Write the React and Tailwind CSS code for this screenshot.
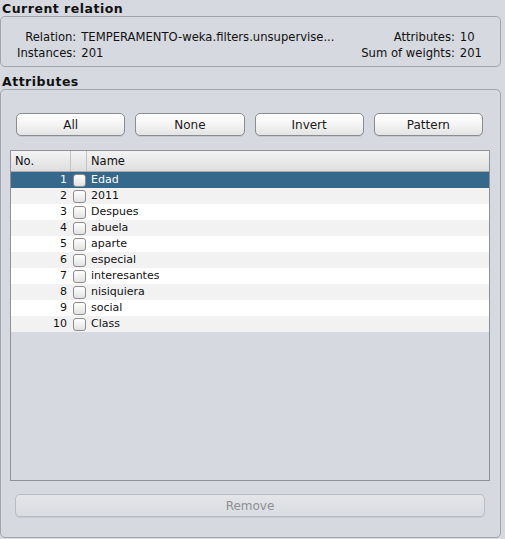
import React from 'react';

const attributes = [
  'Edad', '2011', 'Despues', 'abuela', 'aparte',
  'especial', 'interesantes', 'nisiquiera', 'social', 'Class',
];

const AquaButton = ({ children, disabled }) => (
  <button
    disabled={disabled}
    className={`h-[23px] rounded-[5px] border text-[12px] leading-none shadow-[0_1px_0_rgba(0,0,0,0.08)]
      ${disabled
        ? 'border-[#b9bcc2] bg-gradient-to-b from-[#e3e5e9] to-[#d9dce1] text-[#8d8f93]'
        : 'border-[#8a8c90] bg-gradient-to-b from-[#ffffff] via-[#f4f4f4] to-[#e4e4e4] text-[#1a1a1a]'}`}
  >
    {children}
  </button>
);

const CheckBox = () => (
  <div className="w-[13px] h-[13px] rounded-[3px] border border-[#8c8c8c] bg-gradient-to-b from-[#ffffff] to-[#e2e2e2]" />
);

export default function App() {
  return (
    <div className="w-[505px] h-[539px] bg-[#d6d9df] text-[#111] overflow-hidden" style={{ fontFamily: '"DejaVu Sans", sans-serif' }}>
      {/* --- CURRENT RELATION --- */}
      <div className="h-[16px] pl-[2px] pt-[2px] text-[12.5px] tracking-[0.5px] font-bold leading-[14px]">Current relation</div>
      <div className="w-[501px] h-[51px] rounded-[5px] border border-[#a2a5ab] flex justify-between items-start pl-[16px] pr-[18px] pt-[12px] text-[11.6px] leading-[16px]">
        <div className="grid grid-cols-[auto_auto] gap-x-[5px] content-start">
          <span className="text-right">Relation:</span>
          <span>TEMPERAMENTO-weka.filters.unsupervise...</span>
          <span className="text-right">Instances:</span>
          <span>201</span>
        </div>
        <div className="grid grid-cols-[auto_auto] gap-x-[5px] content-start">
          <span className="text-right">Attributes:</span>
          <span>10</span>
          <span className="text-right">Sum of weights:</span>
          <span>201</span>
        </div>
      </div>

      {/* --- ATTRIBUTES --- */}
      <div className="h-[22px] pl-[2px] pt-[8px] text-[12.5px] tracking-[0.5px] font-bold leading-[14px]">Attributes</div>
      <div className="w-[501px] h-[449px] rounded-[5px] border border-[#a2a5ab] flex flex-col">
        <div className="grid grid-cols-4 gap-x-[10px] pl-[15px] pr-[17px] pt-[23px]">
          <AquaButton>All</AquaButton>
          <AquaButton>None</AquaButton>
          <AquaButton>Invert</AquaButton>
          <AquaButton>Pattern</AquaButton>
        </div>

        <div className="mt-[14px] ml-[9px] w-[480px] h-[331px] border border-[#8e9196] flex flex-col text-[11px]">
          <div className="h-[21px] flex border-b border-[#a9abae] bg-gradient-to-b from-[#f4f4f4] to-[#dedede] leading-[21px] text-[11.5px]">
            <div className="w-[60px] pl-[4px] border-r border-[#c3c3c3]">No.</div>
            <div className="w-[16px] border-r border-[#c3c3c3]" />
            <div className="flex-1 pl-[4px]">Name</div>
          </div>
          {attributes.map((name, i) => {
            const selected = i === 0;
            const rowBg = selected ? 'bg-[#36688b] text-white' : i % 2 === 1 ? 'bg-[#f2f2f2]' : 'bg-white';
            return (
              <div key={name} className={`h-[16px] flex items-center leading-[16px] ${rowBg}`}>
                <div className="w-[60px] pr-[4px] text-right">{i + 1}</div>
                <div className="w-[16px] flex justify-center">
                  <CheckBox />
                </div>
                <div className="flex-1 pl-[4px]">{name}</div>
              </div>
            );
          })}
        </div>

        <div className="mt-[13px] ml-[14px] w-[470px] grid">
          <AquaButton disabled>Remove</AquaButton>
        </div>
      </div>
    </div>
  );
}
